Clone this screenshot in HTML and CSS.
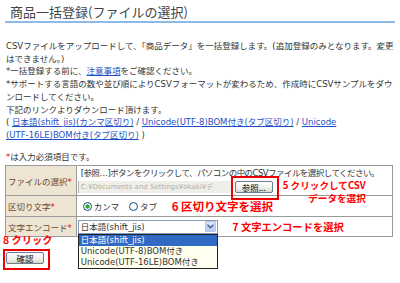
FILE: index.html
```html
<!DOCTYPE html>
<html lang="ja">
<head>
    <meta charset="UTF-8">
    <meta name="viewport" content="width=device-width, initial-scale=1.0">
    <title>商品一括登録(ファイルの選択)</title>
    <link rel="stylesheet" href="styles.css">
</head>
<body>
    <h1 class="page-title">商品一括登録(ファイルの選択)</h1>

    <!-- Intro text -->
    <p class="intro">
        CSVファイルをアップロードして、「商品データ」を一括登録します。(追加登録のみとなります。変更はできません。)<br>
        *一括登録する前に、<a href="#">注意事項</a>をご確認ください。<br>
        *サポートする言語の数や並び順によりCSVフォーマットが変わるため、作成時にCSVサンプルをダウンロードしてください。<br>
        下記のリンクよりダウンロード頂けます。<br>
        ( <a href="#">日本語(shift_jis)(カンマ区切り)</a> / <a href="#">Unicode(UTF-8)BOM付き(タブ区切り)</a> / <a href="#">Unicode<wbr><span class="nobr">(UTF-16LE)BOM付き</span>(タブ区切り)</a> )
    </p>

    <p class="required-note"><span class="req">*</span>は入力必須項目です。</p>

    <!-- Upload form -->
    <table class="form-table">
        <tr class="row-file">
            <th>ファイルの選択<span class="req">*</span></th>
            <td>
                <div class="hint">[参照…]ボタンをクリックして、パソコンの中のCSVファイルを選択してください。</div>
                <div class="file-row">
                    <span class="file-path">C:¥Documents and Settings¥okaki¥デ</span>
                    <span class="marked marked-browse"><button class="xp-btn btn-browse">参照...</button></span>
                    <span class="note note-file">5 クリックしてCSV<br>データを選択</span>
                </div>
            </td>
        </tr>
        <tr class="row-sep">
            <th>区切り文字<span class="req">*</span></th>
            <td>
                <label class="radio"><input type="radio" name="sep" checked>カンマ</label>
                <label class="radio"><input type="radio" name="sep">タブ</label>
                <span class="note note-sep">6 区切り文字を選択</span>
            </td>
        </tr>
        <tr class="row-enc">
            <th>文字エンコード<span class="req">*</span></th>
            <td>
                <div class="select-wrap">
                    <div class="select-box">
                        <span class="select-value">日本語(shift_jis)</span>
                        <span class="select-arrow">
                            <svg width="7" height="5" viewBox="0 0 7 5"><path d="M0.5 0.8 L3.5 3.8 L6.5 0.8" fill="none" stroke="#4d6185" stroke-width="1.4"/></svg>
                        </span>
                    </div>
                    <ul class="select-list">
                        <li class="selected">日本語(shift_jis)</li>
                        <li>Unicode(UTF-8)BOM付き</li>
                        <li>Unicode(UTF-16LE)BOM付き</li>
                    </ul>
                </div>
                <span class="note note-enc">7 文字エンコードを選択</span>
            </td>
        </tr>
    </table>

    <div class="note note-confirm">8 クリック</div>
    <div class="confirm-box">
        <button class="xp-btn btn-confirm">確認</button>
    </div>
</body>
</html>
```

FILE: styles.css
```css
* {
    box-sizing: border-box;
}
body {
    margin: 0;
    padding: 0 5px;
    font-family: "DejaVu Sans", "Noto Sans CJK JP", sans-serif;
    font-size: 8.5px;
    color: #333;
    background: #fff;
}
a {
    color: #1f4fc4;
}
.nobr {
    white-space: nowrap;
}
.page-title {
    margin: 0;
    padding: 3px 0 1px 5px;
    font-family: "Noto Sans CJK JP", sans-serif;
    font-size: 13px;
    line-height: 17px;
    font-weight: normal;
    color: #444;
    border-bottom: 2px solid #8dbbe8;
}
.intro {
    margin: 17px -4px 0 0;
    padding-left: 1px;
    line-height: 12.7px;
}
.required-note {
    margin: 9px 0 0;
    padding-left: 1px;
    line-height: 12.7px;
}
.req {
    color: #e00;
}

/* form table */
.form-table {
    width: 388px;
    margin-top: 2px;
    border-collapse: collapse;
    border: 1px solid #9a9a9a;
}
.form-table th,
.form-table td {
    border: 1px solid #9a9a9a;
    padding: 0 4px;
    vertical-align: middle;
}
.form-table th {
    width: 70px;
    padding-left: 2px;
    background: #ede4d4;
    color: #6b4a2b;
    font-weight: normal;
    text-align: left;
    white-space: nowrap;
}
.row-file td {
    height: 30px;
    padding-top: 1px;
}
.row-sep td {
    height: 21px;
}
.row-enc td {
    height: 20px;
}
.hint {
    line-height: 12px;
    letter-spacing: -0.55px;
    white-space: nowrap;
}
.file-row {
    position: relative;
    display: flex;
    align-items: center;
    height: 16px;
}
.file-path {
    width: 154px;
    height: 12px;
    margin-left: -3px;
    padding-left: 2px;
    background: #efeee8;
    border-left: 1px solid #b8b8b0;
    color: #b0b0a8;
    font-size: 7px;
    line-height: 12px;
    white-space: nowrap;
    overflow: hidden;
}
.marked {
    position: relative;
    display: inline-block;
}
.marked-browse {
    margin-left: 3px;
}
.marked-browse::after {
    content: "";
    position: absolute;
    left: -4px;
    right: -6px;
    top: -5px;
    bottom: -7px;
    border: 2px solid #e00;
}
.xp-btn {
    font-family: "Noto Sans CJK JP", sans-serif;
    font-size: 8.5px;
    line-height: 10px;
    color: #111;
    padding: 0;
    border: 1px solid #6d7d8f;
    border-radius: 2px;
    background: linear-gradient(#ffffff, #ecebe4 70%, #d8d6cc);
}
.btn-browse {
    display: block;
    width: 38px;
    height: 12px;
}
.note {
    font-family: "Noto Sans CJK JP", sans-serif;
    color: #f00;
    font-weight: bold;
    font-size: 10.3px;
    line-height: 12px;
}
.note-file {
    position: absolute;
    left: 202px;
    top: 0;
    font-size: 9.6px;
    line-height: 13px;
    text-align: right;
}
.radio {
    display: inline-flex;
    align-items: center;
    margin-left: 2px;
    margin-right: 5px;
    font-family: "Noto Sans CJK JP", sans-serif;
}
.radio input {
    appearance: none;
    width: 9px;
    height: 9px;
    margin: 0 2px 0 0;
    border: 1px solid #1c5180;
    border-radius: 50%;
    background: radial-gradient(circle, #fff 40%, #e4e4dc);
}
.radio input:checked {
    background: radial-gradient(circle, #2cb52c 0, #21a121 1.8px, #fff 2.4px, #e4e4dc);
}
.note-sep {
    margin-left: 7px;
    font-size: 11.5px;
}

/* encoding select, shown open */
.select-wrap {
    position: relative;
    display: inline-block;
    vertical-align: middle;
}
.select-box {
    display: flex;
    align-items: center;
    width: 140px;
    height: 14px;
    margin-left: -3px;
    padding: 0 1px 0 2px;
    border: 1px solid #7f9db9;
    background: #fff;
}
.select-value {
    flex: 1;
    line-height: 12px;
}
.select-arrow {
    display: flex;
    align-items: center;
    justify-content: center;
    width: 11px;
    height: 11px;
    border: 1px solid #b4c6ea;
    border-radius: 1px;
    background: linear-gradient(#dbe5fb, #b6c9f3);
}
.select-list {
    position: absolute;
    left: -3px;
    top: 14px;
    width: 140px;
    margin: 0;
    padding: 0;
    list-style: none;
    border: 1px solid #222;
    background: #fffff0;
    z-index: 2;
}
.select-list li {
    height: 11px;
    padding-left: 2px;
    line-height: 11px;
}
.select-list .selected {
    background: #316ac5;
    color: #fff;
}
.note-enc {
    margin-left: 12px;
    vertical-align: middle;
}

/* confirm */
.note-confirm {
    margin: -3px 0 0 -2px;
    line-height: 11px;
}
.confirm-box {
    display: inline-block;
    margin: 4px 0 0 -2px;
    padding: 1px 4px 4px 1px;
    border: 2px solid #e00;
}
.btn-confirm {
    display: block;
    width: 38px;
    height: 12px;
}
```
